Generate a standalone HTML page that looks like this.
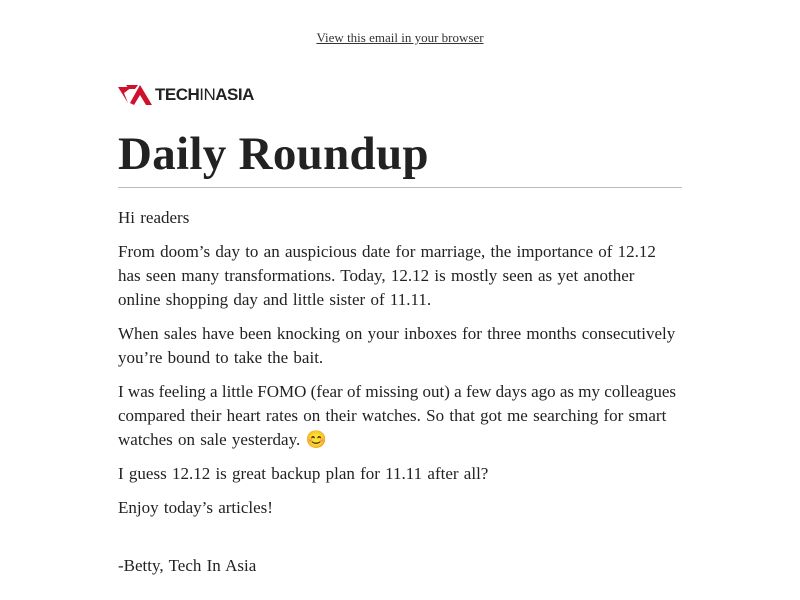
<!DOCTYPE html>
<html><head><meta charset="utf-8"><style>
body{margin:0;background:#fff;font-family:"Liberation Serif",serif;color:#222;}
.top{text-align:center;padding-top:30px;font-size:13px;}
.top a{color:#333;text-decoration:underline;}
.wrap{position:absolute;left:118px;top:80px;width:564px;}
.logo{display:flex;align-items:center;height:30px;}
.logo span{font-family:"Liberation Sans",sans-serif;font-weight:bold;font-size:17px;color:#222;letter-spacing:-0.5px;margin-left:3px;}
.logo span i{font-style:normal;font-weight:normal;}
h1{margin:20px 0 0;font-size:47px;line-height:48px;font-weight:bold;color:#222;letter-spacing:0.3px;}
hr{border:0;border-top:1px solid #bbb;margin:9px 0 0;}
p{margin:0 0 10px;font-size:17px;line-height:24px;word-spacing:1px;white-space:nowrap;}
.s{word-spacing:0;}
</style></head><body>
<div class="top"><a>View this email in your browser</a></div>
<div class="wrap">
<div class="logo"><svg width="34" height="24" viewBox="0 0 34 24"><path d="M0 4 L14 4 L6 10 L10 20 Z" fill="#d0112b"/><path d="M12 20 L22 2 L34 22 L28 22 L22 12 L16 22 Z" fill="#d0112b"/><path d="M8 2 L20 2 L17 6 L11 6 Z" fill="#d0112b"/></svg><span>TECH<i>IN</i>ASIA</span></div>
<h1>Daily Roundup</h1>
<hr>
<div style="height:18px"></div>
<p>Hi readers</p>
<p>From doom’s day to an auspicious date for marriage, the importance of 12.12<br>has seen many transformations. Today, 12.12 is mostly seen as yet another<br>online shopping day and little sister of 11.11.</p>
<p>When sales have been knocking on your inboxes for three months consecutively<br>you’re bound to take the bait.</p>
<p><span class="s">I was feeling a little FOMO (fear of missing out) a few days ago as my colleagues</span><br>compared their heart rates on their watches. So that got me searching for smart<br>watches on sale yesterday. 😊</p>
<p>I guess 12.12 is great backup plan for 11.11 after all?</p>
<p>Enjoy today’s articles!</p>
<p style="margin-top:34px">-Betty, Tech In Asia</p>
</div>
</body></html>
